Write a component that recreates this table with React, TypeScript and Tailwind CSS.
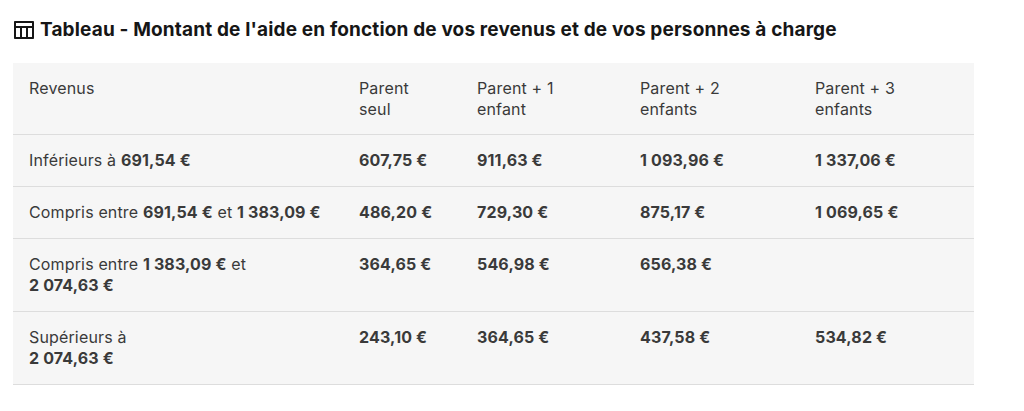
// Tableau des montants de l'aide selon revenus et personnes à charge

const rows: { label: React.ReactNode; values: string[] }[] = [
  {
    label: (
      <>
        Inférieurs à <b className="font-bold">691,54&nbsp;€</b>
      </>
    ),
    values: ["607,75 €", "911,63 €", "1\u00A0093,96 €", "1\u00A0337,06 €"],
  },
  {
    label: (
      <>
        Compris entre <b className="font-bold">691,54&nbsp;€</b> et{" "}
        <b className="font-bold">1&nbsp;383,09&nbsp;€</b>
      </>
    ),
    values: ["486,20 €", "729,30 €", "875,17 €", "1\u00A0069,65 €"],
  },
  {
    label: (
      <>
        Compris entre <b className="font-bold">1&nbsp;383,09&nbsp;€</b> et{" "}
        <b className="font-bold">2&nbsp;074,63&nbsp;€</b>
      </>
    ),
    values: ["364,65 €", "546,98 €", "656,38 €", ""],
  },
  {
    label: (
      <>
        Supérieurs à <br />
        <b className="font-bold">2&nbsp;074,63&nbsp;€</b>
      </>
    ),
    values: ["243,10 €", "364,65 €", "437,58 €", "534,82 €"],
  },
];

const headers: [string, string][] = [
  ["Revenus", ""],
  ["Parent", "seul"],
  ["Parent + 1", "enfant"],
  ["Parent + 2", "enfants"],
  ["Parent + 3", "enfants"],
];
const widths = ["w-[330px]", "w-[118px]", "w-[163px]", "w-[175px]", "w-[175px]"];

function TableIcon() {
  return (
    <svg viewBox="0 0 24 24" className="w-6 h-6 shrink-0 fill-[#161616]">
      <path d="M4 8H20V5H4V8ZM14 19V10H10V19H14ZM16 19H20V10H16V19ZM8 19V10H4V19H8ZM3 3H21C21.5523 3 22 3.44772 22 4V20C22 20.5523 21.5523 21 21 21H3C2.44772 21 2 20.5523 2 20V4C2 3.44772 2.44772 3 3 3Z" />
    </svg>
  );
}

export default function App() {
  return (
    <main
      className="w-[1024px] h-[411px] bg-white text-[#3a3a3a] overflow-hidden"
      style={{ fontFamily: 'Inter, "Noto Sans", "Liberation Sans", sans-serif' }}
    >
      {/* titre */}
      <div className="flex items-center gap-1 pl-3 pt-[18px] h-[42px]">
        <TableIcon />
        <h2 className="text-[19px] leading-6 font-bold text-[#161616] tracking-[0.15px]">
          Tableau - Montant de l'aide en fonction de vos revenus et de vos personnes à charge
        </h2>
      </div>

      {/* tableau */}
      <div className="ml-[13px] mt-[21px] w-[961px] bg-[#f6f6f6]">
        <table className="table-fixed w-full border-collapse text-[16px] leading-[21px] tracking-[0.15px]">
          <thead>
            <tr className="border-b border-[#dddddd]">
              {headers.map(([a, b], i) => (
                <th key={a} className={`${widths[i]} text-left font-normal align-top px-4 pt-[15px] pb-[14px]`}>
                  {a}
                  {b && (
                    <>
                      <br />
                      {b}
                    </>
                  )}
                </th>
              ))}
            </tr>
          </thead>
          <tbody>
            {rows.map((r, i) => (
              <tr key={i} className="border-b border-[#dddddd]">
                <td className="align-top px-4 pt-[15px] pb-[15px]">{r.label}</td>
                {r.values.map((v, j) => (
                  <td key={j} className="align-top px-4 pt-[15px] pb-[15px] font-bold">
                    {v}
                  </td>
                ))}
              </tr>
            ))}
          </tbody>
        </table>
      </div>
    </main>
  );
}
